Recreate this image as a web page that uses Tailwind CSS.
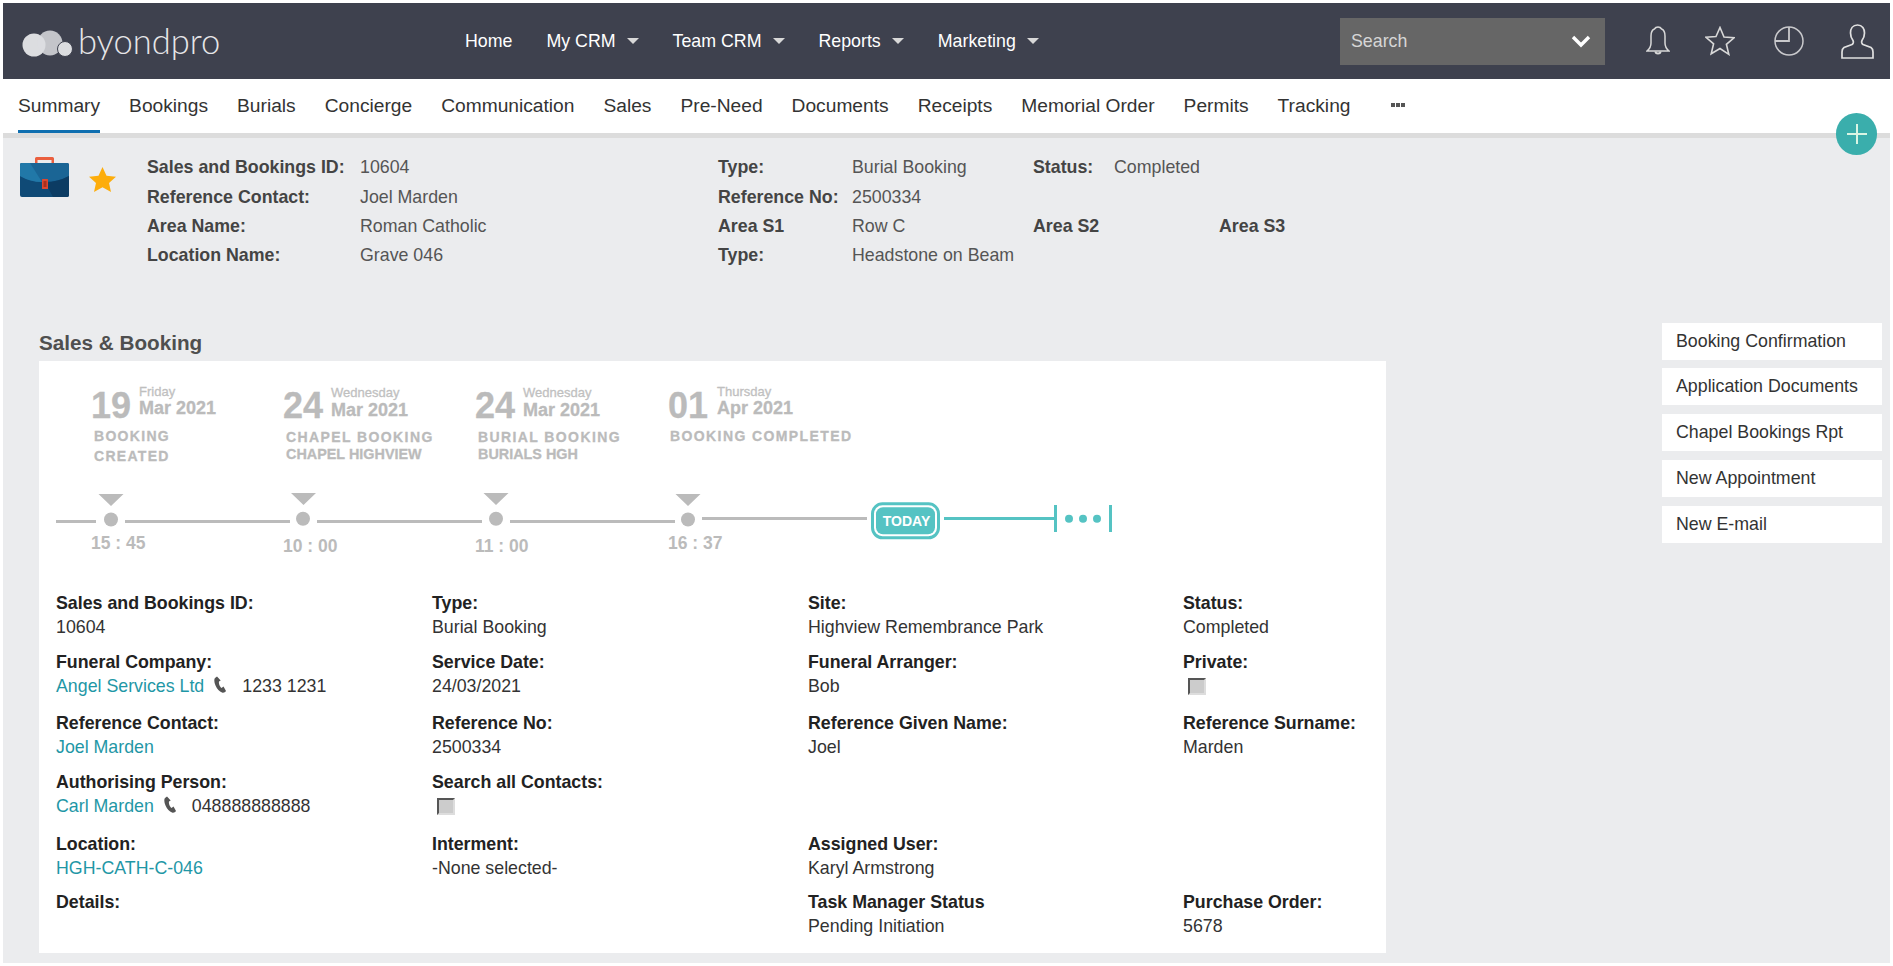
<!DOCTYPE html>
<html>
<head>
<meta charset="utf-8">
<script src="https://cdn.jsdelivr.net/npm/@tailwindcss/browser@4"></script>
</head>
<body class="bg-white font-['Liberation_Sans',Arial,sans-serif] text-[17.8px] text-[#333]">
<div class="relative m-[3px] h-[960px] overflow-hidden bg-[#ebecee]">

  <header class="flex h-[76px] items-center bg-[#3e414e] text-[17.8px] text-white">
    <div class="flex w-[462px] items-center">
      <svg class="ml-[19px] mt-[6px] h-[28px] w-[52px]" viewBox="0 0 52 28">
        <circle cx="12" cy="15" r="11.500" fill="#dcdde0"/>
        <circle cx="28" cy="13" r="12.500" fill="#dcdde0" fill-opacity=".85"/>
        <circle cx="43" cy="19" r="7.500" fill="#dcdde0" stroke="#3e414e" stroke-width="1"/>
      </svg>
      <span class="ml-[4px] font-[Lato,sans-serif] text-[34.500px] font-light leading-none text-[#e6e6e8]">byondpro</span>
    </div>
    <nav class="flex items-center gap-[34px]">
      <a>Home</a>
      <a class="flex items-center gap-[11px]">My CRM <i class="h-0 w-0 border-x-[6px] border-t-[6px] border-x-transparent border-t-[#d8d8d8]"></i></a>
      <a class="flex items-center gap-[11px]">Team CRM <i class="h-0 w-0 border-x-[6px] border-t-[6px] border-x-transparent border-t-[#d8d8d8]"></i></a>
      <a class="flex items-center gap-[11px]">Reports <i class="h-0 w-0 border-x-[6px] border-t-[6px] border-x-transparent border-t-[#d8d8d8]"></i></a>
      <a class="flex items-center gap-[11px]">Marketing <i class="h-0 w-0 border-x-[6px] border-t-[6px] border-x-transparent border-t-[#d8d8d8]"></i></a>
    </nav>
    <div class="ml-auto flex h-[47px] w-[265px] items-center justify-between bg-[#666] pl-[11px] pr-[14px] text-[#d6d6d6]">
      <span>Search</span>
      <svg class="h-[14px] w-[20px]" viewBox="0 0 20 14"><path d="M2 3l8 8 8-8" fill="none" stroke="#fff" stroke-width="3.400"/></svg>
    </div>
    <svg class="ml-[41px] h-[32px] w-[24px]" viewBox="0 0 24 32" fill="none" stroke="#d8d8d8" stroke-width="1.500"><path d="M12 2c-2 0-3 1-3.600 2C6 5 5 7.500 5 11v7c0 4-1.500 6-4 8h22c-2.500-2-4-4-4-8v-7c0-3.500-1-6-3.400-7C15 3 14 2 12 2z"/><path d="M9.500 26.500c0 2.500 5 2.500 5 0" stroke-width="2"/></svg>
    <svg class="ml-[35px] h-[30px] w-[30px]" viewBox="0 0 30 30" fill="none" stroke="#d8d8d8" stroke-width="1.600"><path d="M15 1.500l4 9.500 10 .8-7.600 6.500 2.400 10L15 22.500 6.200 27.800l2.400-10L1 11.300l10-.8z"/></svg>
    <svg class="ml-[39px] h-[30px] w-[30px]" viewBox="0 0 30 30" fill="none" stroke="#c9c9cc" stroke-width="1.500"><circle cx="15" cy="15" r="14"/><path d="M15 1v14H1" stroke-width="1.800"/></svg>
    <svg class="ml-[37px] mr-[16px] h-[35px] w-[33px]" viewBox="0 0 33 35" fill="none" stroke="#e0e0e0" stroke-width="1.700"><path d="M16.500 1c-5 0-7 4-7 8 0 3 1 5.500 2.500 7.500.6 1 .6 3-1 4L3 23.500C1.500 24.500 1 26 1 28v6h31v-6c0-2-.5-3.500-2-4.500L22 20.500c-1.600-1-1.600-3-1-4 1.500-2 2.500-4.500 2.500-7.500 0-4-2-8-7-8z"/></svg>
  </header>

  <nav class="flex h-[54px] items-stretch gap-[29px] bg-white pl-[15px] text-[19.200px] text-[#333]">
    <a class="flex items-center border-b-[3px] border-[#0f6fb0] pt-[3px]">Summary</a>
    <a class="flex items-center">Bookings</a>
    <a class="flex items-center">Burials</a>
    <a class="flex items-center">Concierge</a>
    <a class="flex items-center">Communication</a>
    <a class="flex items-center">Sales</a>
    <a class="flex items-center">Pre-Need</a>
    <a class="flex items-center">Documents</a>
    <a class="flex items-center">Receipts</a>
    <a class="flex items-center">Memorial Order</a>
    <a class="flex items-center">Permits</a>
    <a class="flex items-center">Tracking</a>
    <a class="ml-[12px] flex items-center gap-[1px] pb-[3px]"><i class="size-[4px] bg-[#555]"></i><i class="size-[4px] bg-[#555]"></i><i class="size-[4px] bg-[#555]"></i></a>
  </nav>
  <div class="h-[5px] bg-[#dcdcdc]"></div>

  <button class="absolute right-[13px] top-[110px] flex h-[42px] w-[41px] items-center justify-center rounded-full bg-[#3aaeac]">
    <svg class="size-[22px]" viewBox="0 0 22 22"><path d="M11 1v20M1 11h20" stroke="#d9f5e4" stroke-width="2"/></svg>
  </button>

  <section class="flex h-[185px] items-start pl-[17px] pt-[14px]">
    <svg class="mt-[4px] h-[41px] w-[49px]" viewBox="0 0 49 41">
      <path d="M15 7V2.500Q15 1 16.500 1h16Q34 1 34 2.500V7h-2.500V4h-14v3z" fill="#ea5f3e"/>
      <rect x="0" y="7" width="49" height="34" rx="2" fill="#0f4a76"/>
      <path d="M0 9q0-2 2-2h45q2 0 2 2v11q-11 6-24.500 6T0 20z" fill="#1a6595"/>
      <path d="M0 9q0-2 2-2h8l12 19q-12 0-22-6z" fill="#2178a8"/>
      <path d="M25 26q13 0 24-6v19q0 2-2 2H33z" fill="#0c3c63"/>
      <rect x="22" y="23" width="6" height="10" rx=".5" fill="#dd472f"/>
      <rect x="23.500" y="25" width="3" height="6" fill="#a8301f"/>
    </svg>
    <svg class="ml-[20px] mt-[15px] h-[25px] w-[27px]" viewBox="0 0 27 25"><path d="M13.500 0l4 8.700 9.500 1-7 6.400 2 8.900-8.500-4.800L5 25l2-8.900-7-6.400 9.500-1z" fill="#fdad0c"/></svg>
    <div class="ml-[31px] mt-[1px] grid grid-cols-[213px_358px_134px_181px_81px_105px_auto] auto-rows-[29.300px] items-center text-[#555]">
      <b class="text-[#444]">Sales and Bookings ID:</b><span>10604</span><b class="text-[#444]">Type:</b><span>Burial Booking</span><b class="text-[#444]">Status:</b><span>Completed</span><span></span>
      <b class="text-[#444]">Reference Contact:</b><span>Joel Marden</span><b class="text-[#444]">Reference No:</b><span>2500334</span><span></span><span></span><span></span>
      <b class="text-[#444]">Area Name:</b><span>Roman Catholic</span><b class="text-[#444]">Area S1</b><span>Row C</span><b class="text-[#444]">Area S2</b><span></span><b class="text-[#444]">Area S3</b>
      <b class="text-[#444]">Location Name:</b><span>Grave 046</span><b class="text-[#444]">Type:</b><span>Headstone on Beam</span><span></span><span></span><span></span>
    </div>
  </section>

  <div class="flex items-start">
    <div class="ml-[36px] w-[1347px] pt-[8px]">
      <h2 class="h-[30px] text-[20.700px] font-bold leading-[24px] text-[#4f4f4f]">Sales &amp; Booking</h2>
      <div class="h-[592px] bg-white">
        <div class="grid h-[128px] grid-cols-[192px_192px_192px_1fr] pl-[52px] pt-[26px] font-bold text-[#bbb] [-webkit-text-stroke:0.3px_#bbb]">
          <div>
            <div class="flex"><span class="text-[36px] leading-[38px]">19</span><div class="ml-[8px] -mt-[2px]"><div class="text-[13px] leading-[13px] font-normal text-[#c4c4c4]">Friday</div><div class="text-[18px] leading-[20px]">Mar 2021</div></div></div>
            <div class="ml-[3px] mt-[1px] text-[14px] leading-[20px] tracking-[1.300px]">BOOKING<br>CREATED</div>
          </div>
          <div>
            <div class="flex"><span class="text-[36px] leading-[38px]">24</span><div class="ml-[8px] -mt-[1px]"><div class="text-[13px] leading-[13px] font-normal text-[#c4c4c4]">Wednesday</div><div class="text-[18px] leading-[22px]">Mar 2021</div></div></div>
            <div class="ml-[3px] mt-[3px] text-[14px] leading-[18px] tracking-[1.400px]">CHAPEL BOOKING</div>
            <div class="ml-[3px] text-[14.400px] leading-[16px]">CHAPEL HIGHVIEW</div>
          </div>
          <div>
            <div class="flex"><span class="text-[36px] leading-[38px]">24</span><div class="ml-[8px] -mt-[1px]"><div class="text-[13px] leading-[13px] font-normal text-[#c4c4c4]">Wednesday</div><div class="text-[18px] leading-[22px]">Mar 2021</div></div></div>
            <div class="ml-[3px] mt-[3px] text-[14px] leading-[18px] tracking-[1.400px]">BURIAL BOOKING</div>
            <div class="ml-[3px] text-[14.400px] leading-[16px]">BURIALS HGH</div>
          </div>
          <div class="ml-[1px]">
            <div class="flex"><span class="text-[36px] leading-[38px]">01</span><div class="ml-[9px] -mt-[2px]"><div class="text-[13px] leading-[13px] font-normal text-[#c4c4c4]">Thursday</div><div class="text-[18px] leading-[20px]">Apr 2021</div></div></div>
            <div class="ml-[2px] mt-[1px] text-[14px] leading-[20px] tracking-[1.400px]">BOOKING COMPLETED</div>
          </div>
        </div>
        <svg class="block h-[44px] w-[1347px] overflow-visible" viewBox="0 0 1347 44">
          <g fill="#bbb">
            <path d="M59.500 5h25l-12.500 12zM252 4h25l-12.500 12zM444.500 4h25l-12.500 12zM636.500 5h25l-12.500 12z"/>
            <circle cx="72" cy="30.500" r="7"/><circle cx="264" cy="29.700" r="7"/><circle cx="457" cy="29.700" r="7"/><circle cx="649" cy="30.500" r="7"/>
            <rect x="17" y="31" width="40" height="3"/><rect x="86" y="31" width="165" height="3"/><rect x="278" y="31" width="165" height="3"/><rect x="471" y="31" width="165" height="3"/><rect x="663" y="28" width="165" height="3"/>
          </g>
          <g fill="#55c3c3">
            <rect x="833.500" y="14.800" width="66" height="34" rx="10" fill="#fff" stroke="#55c3c3" stroke-width="3"/>
            <rect x="837" y="18.300" width="59" height="27" rx="7"/>
            <rect x="905" y="28" width="111" height="3"/>
            <rect x="1015" y="16" width="3" height="27"/><rect x="1070" y="16" width="3" height="27"/>
            <circle cx="1030" cy="29.700" r="4"/><circle cx="1044" cy="29.700" r="4"/><circle cx="1058" cy="29.700" r="4"/>
          </g>
          <text x="867.500" y="36.500" text-anchor="middle" fill="#fff" font-family="Liberation Sans" font-size="14" font-weight="700">TODAY</text>
        </svg>
        <div class="grid h-[58px] grid-cols-[192px_192px_192px_1fr] pl-[52px] text-[17.500px] font-bold leading-[20px] text-[#bbb]">
          <div>15 : 45</div><div class="pt-[3px]">10 : 00</div><div class="pt-[3px]">11 : 00</div><div class="ml-[1px]">16 : 37</div>
        </div>
        <div class="grid grid-cols-[376px_376px_375px_1fr] grid-rows-[59px_61px_59px_62px_58px_60px] pl-[17px] leading-[24px] text-[#333]">
          <div><b class="block text-[#222]">Sales and Bookings ID:</b>10604</div>
          <div><b class="block text-[#222]">Type:</b>Burial Booking</div>
          <div><b class="block text-[#222]">Site:</b>Highview Remembrance Park</div>
          <div><b class="block text-[#222]">Status:</b>Completed</div>

          <div><b class="block text-[#222]">Funeral Company:</b><div class="flex items-center"><a class="text-[#1f97a6]">Angel Services Ltd</a>
            <svg class="ml-[10px] -mt-[4px] h-[17px] w-[13px]" viewBox="0 0 13 17"><path d="M3 .5L1 2C0 3 0 6 1.500 9.500S5.500 15.500 8 16.500c1.500.5 3 0 4-1.500L9.500 10.500 7.500 12C6 11 4.500 7.500 5 5.500l1.700-1z" fill="#555"/></svg>
            <span class="ml-[15px]">1233 1231</span></div></div>
          <div><b class="block text-[#222]">Service Date:</b>24/03/2021</div>
          <div><b class="block text-[#222]">Funeral Arranger:</b>Bob</div>
          <div><b class="block text-[#222]">Private:</b><i class="ml-[5px] mt-[4px] block h-[17px] w-[18px] border-2 border-b-[#ddd] border-l-[#555] border-r-[#ddd] border-t-[#555] bg-[#ccc]"></i></div>

          <div><b class="block text-[#222]">Reference Contact:</b><a class="text-[#1f97a6]">Joel Marden</a></div>
          <div><b class="block text-[#222]">Reference No:</b>2500334</div>
          <div><b class="block text-[#222]">Reference Given Name:</b>Joel</div>
          <div><b class="block text-[#222]">Reference Surname:</b>Marden</div>

          <div><b class="block text-[#222]">Authorising Person:</b><div class="flex items-center"><a class="text-[#1f97a6]">Carl Marden</a>
            <svg class="ml-[10px] -mt-[4px] h-[17px] w-[13px]" viewBox="0 0 13 17"><path d="M3 .5L1 2C0 3 0 6 1.500 9.500S5.500 15.500 8 16.500c1.500.5 3 0 4-1.500L9.500 10.500 7.500 12C6 11 4.500 7.500 5 5.500l1.700-1z" fill="#555"/></svg>
            <span class="ml-[15px]">048888888888</span></div></div>
          <div><b class="block text-[#222]">Search all Contacts:</b><i class="ml-[5px] mt-[4px] block h-[17px] w-[18px] border-2 border-b-[#ddd] border-l-[#555] border-r-[#ddd] border-t-[#555] bg-[#ccc]"></i></div>
          <div></div>
          <div></div>

          <div><b class="block text-[#222]">Location:</b><a class="text-[#1f97a6]">HGH-CATH-C-046</a></div>
          <div><b class="block text-[#222]">Interment:</b>-None selected-</div>
          <div><b class="block text-[#222]">Assigned User:</b>Karyl Armstrong</div>
          <div></div>

          <div><b class="block text-[#222]">Details:</b></div>
          <div></div>
          <div><b class="block text-[#222]">Task Manager Status</b>Pending Initiation</div>
          <div><b class="block text-[#222]">Purchase Order:</b>5678</div>
        </div>
      </div>
    </div>
    <aside class="ml-[276px] flex w-[220px] flex-col gap-[9px] text-[#333]">
      <a class="-mb-[1px] flex h-[37px] items-center bg-white pl-[14px]">Booking Confirmation</a>
      <a class="flex h-[37px] items-center bg-white pl-[14px]">Application Documents</a>
      <a class="flex h-[37px] items-center bg-white pl-[14px]">Chapel Bookings Rpt</a>
      <a class="flex h-[37px] items-center bg-white pl-[14px]">New Appointment</a>
      <a class="flex h-[37px] items-center bg-white pl-[14px]">New E-mail</a>
    </aside>
  </div>
</div>
</body>
</html>
